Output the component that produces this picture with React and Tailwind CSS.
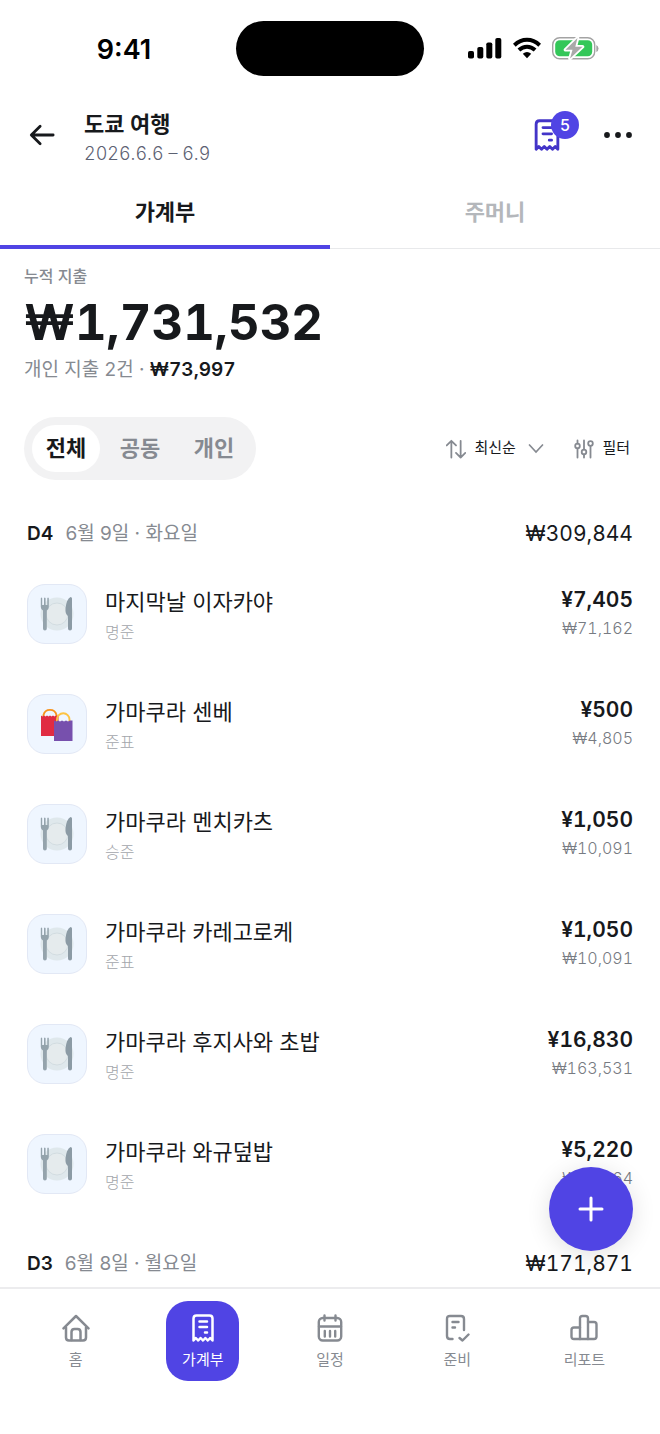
import { useState } from "react";

const entries = [
  { name: "마지막날 이자카야", payer: "명준", yen: "¥7,405", won: "₩71,162", type: "food" },
  { name: "가마쿠라 센베", payer: "준표", yen: "¥500", won: "₩4,805", type: "shopping" },
  { name: "가마쿠라 멘치카츠", payer: "승준", yen: "¥1,050", won: "₩10,091", type: "food" },
  { name: "가마쿠라 카레고로케", payer: "준표", yen: "¥1,050", won: "₩10,091", type: "food" },
  { name: "가마쿠라 후지사와 초밥", payer: "명준", yen: "¥16,830", won: "₩163,531", type: "food" },
  { name: "가마쿠라 와규덮밥", payer: "명준", yen: "¥5,220", won: "₩50,164", type: "food" },
];

function StrokeIcon({ className, width = 2, children }) {
  return (
    <svg
      viewBox="0 0 28 28"
      className={className}
      fill="none"
      stroke="currentColor"
      strokeWidth={width}
      strokeLinecap="round"
      strokeLinejoin="round"
      aria-hidden="true"
    >
      {children}
    </svg>
  );
}

function ReceiptIcon({ className }) {
  return (
    <StrokeIcon className={className} width={2.5}>
      <path d="M4.500 26.500V4.500Q4.500 1.500 7.500 1.500H20.500Q23.500 1.500 23.500 4.500V26.500L21.200 24L18.800 26.500L16.400 24L14 26.500L11.600 24L9.200 26.500L6.800 24Z" />
      <path d="M10.500 7.500H18M10.500 13H18M16 18.500H18" />
    </StrokeIcon>
  );
}

function HomeIcon() {
  return (
    <StrokeIcon className="size-7" width={2.5}>
      <path d="M1.500 14.300L14 2L26.500 14.300" />
      <path d="M4 13.500V23.500Q4 26.500 7 26.500H21Q24 26.500 24 23.500V13.500" />
      <path d="M9.500 26V18Q9.500 15 12.500 15H15.500Q18.500 15 18.500 18V26" />
    </StrokeIcon>
  );
}

function CalendarIcon() {
  return (
    <StrokeIcon className="size-7" width={2.4}>
      <rect x="2.800" y="4" width="22.400" height="22.500" rx="4" />
      <path d="M3 12.500H25M8.500 1.500V6.500M19.500 1.500V6.500M8.800 17V22.500M14 17V22.500M19.200 17V22.500" />
    </StrokeIcon>
  );
}

function ChecklistIcon() {
  return (
    <StrokeIcon className="size-7" width={2.4}>
      <path d="M9.500 25H7Q4 25 4 22V5Q4 2 7 2H18Q21 2 21 5V16" />
      <path d="M9.500 8H15.500M9.500 13.500H12M16.500 24L19.500 26.500L25.500 20.500" />
    </StrokeIcon>
  );
}

function ReportIcon() {
  return (
    <StrokeIcon className="size-7" width={2.4}>
      <path d="M10 25H4Q1.500 25 1.500 22.500V16Q1.500 13.500 4 13.500H10" />
      <path d="M10 25V4.500Q10 2 12.500 2H15.500Q18 2 18 4.500V25Z" />
      <path d="M18 8H24Q26.500 8 26.500 10.500V22.500Q26.500 25 24 25H18" />
    </StrokeIcon>
  );
}

function FoodIcon() {
  return (
    <svg viewBox="0 0 34 34" className="size-[34px]" aria-hidden="true">
      <circle cx="17" cy="17" r="16.500" fill="#dfe8ec" />
      <circle cx="17" cy="17" r="11" fill="#e5ebed" stroke="#cdd8dd" strokeWidth="0.8" />
      <path
        d="M0.800 1.200Q1.500 0 2.200 1.200V8H4V1.200Q4.800 0 5.600 1.200V8H7.300V1.200Q8 0 8.800 1.200V10Q8.800 12.500 6.800 13.500V31.500Q6.800 33.500 4.900 33.500Q3 33.500 3 31.500V13.500Q0.800 12.500 0.800 10Z"
        fill="#94a3ac"
      />
      <path d="M30.500 0Q32 0 32 1.500V31.500Q32 33.500 30 33.500Q28 33.500 28 31.500V19Q25 17 25.500 11.500Q26.500 2 30.500 0Z" fill="#8c9ba5" />
    </svg>
  );
}

function ShoppingIcon() {
  return (
    <svg viewBox="0 0 34 34" className="size-[34px]" aria-hidden="true">
      <path d="M3.500 11V8A6.700 6.700 0 0 1 16.500 8V11" fill="none" stroke="#f7931e" strokeWidth="1.900" />
      <path d="M1 8.500L2.500 9.500L4 8.500L5.500 9.500L7 8.500L8.500 9.500L10 8.500L11.500 9.500L13 8.500L14.500 9.500L16 8.500L18.500 9V29H1Z" fill="#e02b42" />
      <path d="M17 16V12.500A6 6 0 0 1 29.500 12.500V16" fill="none" stroke="#fdc342" strokeWidth="1.900" />
      <path d="M14 13.500L16 14.500L18 13.500L20 14.500L22 13.500L24 14.500L26 13.500L28 14.500L30 13.500L32.500 13.500V34H14Z" fill="#7750ad" />
    </svg>
  );
}

function StatusBar() {
  return (
    <div className="grid h-24 grid-cols-[1fr_auto_1fr] items-center">
      <span className="pt-1 pl-3 text-center text-[27px] font-semibold text-black">9:41</span>
      <div className="h-[55px] w-[188px] rounded-full bg-black" />
      <div className="flex items-center justify-center gap-[11px] pr-[18px]">
        <svg viewBox="0 0 34 22" className="h-[22px] w-[34px]" aria-hidden="true">
          <rect x="0" y="14" width="6" height="7.500" rx="1.800" />
          <rect x="9.300" y="10" width="6" height="11.500" rx="1.800" />
          <rect x="18.300" y="5.500" width="6" height="16" rx="1.800" />
          <rect x="27.300" y="1" width="6" height="20.500" rx="1.800" />
        </svg>
        <svg viewBox="0 0 28 22" className="h-[22px] w-7" fill="none" stroke="#000" strokeWidth="4" aria-hidden="true">
          <path d="M1.300 8.200Q7 2.800 14 2.800Q21 2.800 26.700 8.200" />
          <path d="M5.900 13Q9.500 9.700 14 9.700Q18.500 9.700 22.100 13" />
          <path d="M9.800 16.800Q14 13.200 18.200 16.800L14 21.200Z" fill="#000" stroke="none" />
        </svg>
        <svg viewBox="0 0 47 24" className="h-6 w-[47px]" aria-hidden="true">
          <rect x="0.700" y="1.700" width="42" height="21" rx="7" fill="none" stroke="#a3a3a3" strokeWidth="1.400" />
          <path d="M44.300 9V16Q46.500 15 46.500 12.500Q46.500 10 44.300 9Z" fill="#a3a3a3" />
          <rect x="3.200" y="4.200" width="37" height="16" rx="4.500" fill="#34c759" />
          <path
            d="M25.500 2L13.500 13.800H20.500L18 22.500L30.500 10.700H23.300Z"
            fill="#a9a9a9"
            stroke="#fff"
            strokeWidth="3.600"
            strokeLinejoin="round"
            paintOrder="stroke"
          />
        </svg>
      </div>
    </div>
  );
}

function Header() {
  return (
    <header className="mb-[6px] flex h-[78px] items-center px-6">
      <button type="button" aria-label="뒤로" className="flex size-9 items-center justify-center">
        <StrokeIcon className="size-[26px]" width={3}>
          <path d="M26 14H3M12 4.500L2.500 14L12 23.500" />
        </StrokeIcon>
      </button>
      <div className="ml-6 flex-1 pt-[6px]">
        <h1 className="text-[22px] leading-8 font-semibold">도쿄 여행</h1>
        <p className="text-lg leading-7 font-light text-[#5c6172] tabular-nums">2026.6.6 – 6.9</p>
      </div>
      <button type="button" aria-label="영수증" className="relative mr-[33px] flex size-10 items-center justify-center text-[#4334c8]">
        <ReceiptIcon className="size-8" />
        <span className="absolute -top-1 -right-3 flex size-7 items-center justify-center rounded-full bg-[#5044e4] text-base font-medium text-white">
          5
        </span>
      </button>
      <button type="button" aria-label="더보기" className="flex size-9 items-center justify-center">
        <svg viewBox="0 0 28 6" className="h-[6px] w-7" fill="currentColor" aria-hidden="true">
          <circle cx="3" cy="3" r="2.900" />
          <circle cx="14" cy="3" r="2.900" />
          <circle cx="25" cy="3" r="2.900" />
        </svg>
      </button>
    </header>
  );
}

function DayHeader({ day, date, total }) {
  return (
    <div className="flex h-[50px] items-center justify-between">
      <div className="flex items-center gap-3">
        <span className="text-[19px] font-semibold">{day}</span>
        <span className="text-[19px] text-[#868a91]">{date}</span>
      </div>
      <span className="text-[21px] tabular-nums">{total}</span>
    </div>
  );
}

function EntryRow({ entry }) {
  return (
    <li className="flex h-[110px] items-center">
      <div className="flex size-[60px] items-center justify-center rounded-[18px] border border-[#e2e8f5] bg-[#eff6ff]">
        {entry.type === "food" ? <FoodIcon /> : <ShoppingIcon />}
      </div>
      <div className="ml-[18px] flex-1 pt-1">
        <p className="text-[22px] leading-8">{entry.name}</p>
        <p className="text-base leading-7 font-light text-[#a3a6ab]">{entry.payer}</p>
      </div>
      <div className="text-right tabular-nums">
        <p className="text-[21px] leading-7 font-semibold">{entry.yen}</p>
        <p className="text-base leading-7 font-light text-[#777b82]">{entry.won}</p>
      </div>
    </li>
  );
}

const navItems = [
  { label: "홈", icon: <HomeIcon /> },
  { label: "가계부", icon: <ReceiptIcon className="size-7" /> },
  { label: "일정", icon: <CalendarIcon /> },
  { label: "준비", icon: <ChecklistIcon /> },
  { label: "리포트", icon: <ReportIcon /> },
];

export default function App() {
  const [tab, setTab] = useState("가계부");
  const [scope, setScope] = useState("전체");
  const [page, setPage] = useState("가계부");

  return (
    <div className="relative flex h-screen flex-col bg-white font-['Inter','Noto_Sans_CJK_KR',sans-serif] text-[#17191c]">
      <StatusBar />
      <Header />

      <div className="flex border-b border-[#e8e9eb]" role="tablist">
        {["가계부", "주머니"].map((item) => (
          <button
            key={item}
            type="button"
            role="tab"
            aria-selected={tab === item}
            onClick={() => setTab(item)}
            className={`-mb-px h-[69px] flex-1 border-b-4 text-[22px] font-semibold ${
              tab === item ? "border-[#5044e4]" : "border-transparent text-[#b4b7bb]"
            }`}
          >
            {item}
          </button>
        ))}
      </div>

      <main className="min-h-0 flex-1 overflow-y-auto [scrollbar-width:none]">
        <section className="px-6 pt-[11px]">
          <p className="text-base leading-8 font-medium text-[#868a91]">누적 지출</p>
          <p className="text-[49px] leading-[62px] font-bold tabular-nums">₩1,731,532</p>
          <p className="text-[19px] leading-8 text-[#868a91]">
            개인 지출 2건 · <strong className="font-semibold text-[#17191c] tabular-nums">₩73,997</strong>
          </p>
        </section>

        <div className="mt-[31px] flex items-center justify-between pr-[30px] pl-6">
          <div className="flex gap-[6px] rounded-full bg-[#f2f2f3] p-2">
            {["전체", "공동", "개인"].map((item) => (
              <button
                key={item}
                type="button"
                aria-pressed={scope === item}
                onClick={() => setScope(item)}
                className={`h-[47px] w-[68px] rounded-full text-[22px] font-semibold ${
                  scope === item ? "bg-white" : "text-[#868a91]"
                }`}
              >
                {item}
              </button>
            ))}
          </div>
          <div className="flex items-center gap-[30px]">
            <div className="flex items-center gap-2">
              <StrokeIcon className="size-5 text-[#868a91]" width={2.5}>
                <path d="M7.500 26V2.500M1 9L7.500 2.500L14 9M20.500 2.500V26M14 19.500L20.500 26L27 19.500" />
              </StrokeIcon>
              <select aria-label="정렬" className="mr-1 appearance-none bg-transparent text-[15px]">
                <option>최신순</option>
                <option>금액순</option>
              </select>
              <svg viewBox="0 0 16 10" className="h-[10px] w-4" fill="none" stroke="#868a91" strokeWidth="1.700" aria-hidden="true">
                <path d="M1.500 1L8 8L14.500 1" strokeLinecap="round" />
              </svg>
            </div>
            <button type="button" className="flex items-center gap-2 text-[15px]">
              <svg viewBox="0 0 20 20" className="size-5 text-[#868a91]" fill="none" stroke="currentColor" strokeWidth="1.800" strokeLinecap="round" aria-hidden="true">
                <path d="M3.500 1.500V4.500M3.500 9.500V18.500M10 1.500V10.500M10 15.500V18.500M16.500 7V18.500" />
                <circle cx="3.500" cy="7" r="2.300" />
                <circle cx="10" cy="13" r="2.300" />
                <circle cx="16.500" cy="4.500" r="2.300" />
              </svg>
              필터
            </button>
          </div>
        </div>

        <section className="mt-[29px] px-[27px]">
          <DayHeader day="D4" date="6월 9일 · 화요일" total="₩309,844" />
          <ul className="mb-5">
            {entries.map((entry) => (
              <EntryRow key={entry.name} entry={entry} />
            ))}
          </ul>
          <DayHeader day="D3" date="6월 8일 · 월요일" total="₩171,871" />
        </section>
      </main>

      <button
        type="button"
        aria-label="지출 추가"
        className="absolute right-[27px] bottom-[183px] flex size-[84px] items-center justify-center rounded-full bg-[#5044e4] text-white shadow-[0_4px_24px_rgba(0,0,0,0.12)]"
      >
        <StrokeIcon className="size-7" width={3}>
          <path d="M14 3V25M3 14H25" />
        </StrokeIcon>
      </button>

      <nav className="flex h-[147px] items-start border-t-2 border-[#ececee] px-3 pt-3">
        {navItems.map(({ label, icon }) => (
          <div key={label} className="flex flex-1 justify-center">
            <a
              href="#"
              aria-current={page === label ? "page" : undefined}
              onClick={(e) => {
                e.preventDefault();
                setPage(label);
              }}
              className={`flex h-20 w-[73px] flex-col items-center gap-1 rounded-[22px] pt-[13px] text-[15px] leading-7 ${
                page === label ? "bg-[#5044e4] text-white" : "text-[#868a91]"
              }`}
            >
              {icon}
              {label}
            </a>
          </div>
        ))}
      </nav>
    </div>
  );
}
